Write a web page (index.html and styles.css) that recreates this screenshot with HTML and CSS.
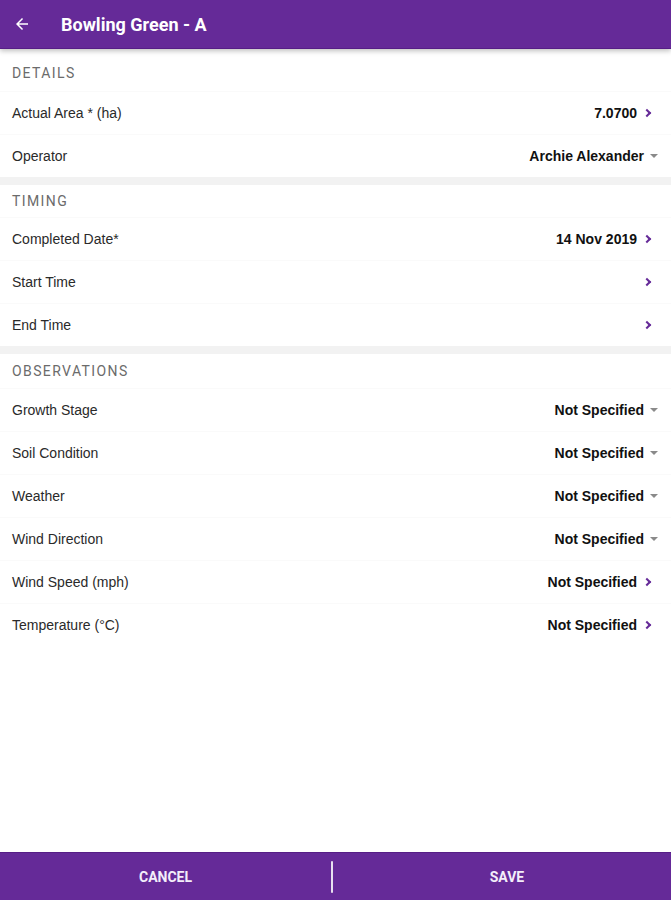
FILE: index.html
```html
<!DOCTYPE html>
<html>
<head>
<meta charset="utf-8">
<link rel="stylesheet" href="styles.css">
</head>
<body>
<div class="app">
  <header class="topbar">
    <svg class="back" width="18" height="18" viewBox="0 0 24 24"><path d="M20 11H7.83l5.59-5.59L12 4l-8 8 8 8 1.41-1.41L7.83 13H20v-2z" fill="#fff"/></svg>
    <h1 class="title">Bowling Green - A</h1>
  </header>
  <main class="content">
    <section class="section first">
      <div class="sec-head">DETAILS</div>
      <div class="row"><span class="label">Actual Area * (ha)</span><span class="value">7.0700<i class="chev"></i></span></div>
      <div class="row"><span class="label">Operator</span><span class="value">Archie Alexander<i class="caret"></i></span></div>
    </section>
    <section class="section">
      <div class="sec-head">TIMING</div>
      <div class="row"><span class="label">Completed Date*</span><span class="value">14 Nov 2019<i class="chev"></i></span></div>
      <div class="row"><span class="label">Start Time</span><span class="value"><i class="chev"></i></span></div>
      <div class="row"><span class="label">End Time</span><span class="value"><i class="chev"></i></span></div>
    </section>
    <section class="section obs">
      <div class="sec-head">OBSERVATIONS</div>
      <div class="row"><span class="label">Growth Stage</span><span class="value">Not Specified<i class="caret"></i></span></div>
      <div class="row"><span class="label">Soil Condition</span><span class="value">Not Specified<i class="caret"></i></span></div>
      <div class="row"><span class="label">Weather</span><span class="value">Not Specified<i class="caret"></i></span></div>
      <div class="row"><span class="label">Wind Direction</span><span class="value">Not Specified<i class="caret"></i></span></div>
      <div class="row"><span class="label">Wind Speed (mph)</span><span class="value">Not Specified<i class="chev"></i></span></div>
      <div class="row"><span class="label">Temperature (°C)</span><span class="value">Not Specified<i class="chev"></i></span></div>
    </section>
  </main>
  <footer class="bottombar">
    <button class="action cancel">CANCEL</button>
    <span class="divider"></span>
    <button class="action save">SAVE</button>
  </footer>
</div>
</body>
</html>
```
FILE: styles.css
```css
* { box-sizing: border-box; }
html, body { margin: 0; padding: 0; }
body {
  font-family: "Liberation Sans", Arial, sans-serif;
  background: #fff;
  color: #222;
}
.app {
  width: 671px;
  height: 900px;
  display: flex;
  flex-direction: column;
}
.topbar {
  height: 49px;
  flex: 0 0 49px;
  background: #652a98;
  border-bottom: 1px solid #561e86;
  box-shadow: 0 2px 5px rgba(0,0,0,0.25);
  display: flex;
  align-items: center;
  padding-left: 13px;
  position: relative;
  z-index: 2;
}
.back { display: block; }
.title {
  margin: 0 0 0 30px;
  font-family: Roboto, "Liberation Sans", sans-serif;
  font-weight: 700;
  font-size: 18px;
  color: #fff;
}
.content {
  flex: 1;
  display: flex;
  flex-direction: column;
}
.section {
  border-bottom: 8px solid #f2f2f2;
}
.section:last-child { border-bottom: none; }
.sec-head {
  height: 32px;
  display: flex;
  align-items: center;
  padding-left: 12px;
  font-family: Roboto, "Liberation Sans", sans-serif;
  font-size: 14px;
  letter-spacing: 1.4px;
  color: #6b6b6b;
}
.section.first .sec-head {
  height: 42px;
  padding-top: 5px;
}
.section.obs .sec-head {
  height: 34px;
}
.row {
  height: 43px;
  display: flex;
  align-items: center;
  justify-content: space-between;
  padding: 0 12px;
  border-top: 1px solid #fafafa;
}
.label {
  font-size: 14px;
  color: #2a2a2a;
}
.value {
  display: flex;
  align-items: center;
  font-size: 14px;
  font-weight: 700;
  color: #111;
}
.chev {
  display: inline-block;
  width: 6px;
  height: 6px;
  border-right: 2px solid #652a98;
  border-top: 2px solid #652a98;
  transform: rotate(45deg);
  margin-left: 7px;
  margin-right: 9px;
}
.caret {
  display: inline-block;
  width: 0;
  height: 0;
  border-left: 4px solid transparent;
  border-right: 4px solid transparent;
  border-top: 4px solid #8a8a8a;
  margin-left: 6px;
  margin-right: 1px;
}
.bottombar {
  height: 48px;
  flex: 0 0 48px;
  background: #652a98;
  border-top: 1px solid #561e86;
  display: flex;
  align-items: center;
}
.action {
  height: 100%;
  background: transparent;
  border: none;
  color: #f3eefa;
  font-family: Roboto, "Liberation Sans", sans-serif;
  font-weight: 700;
  font-size: 14px;
  padding: 0;
}
.action.cancel { flex: 0 0 331px; }
.action.save { flex: 1; padding-left: 10px; }
.divider {
  width: 2px;
  height: 32px;
  background: #e8e0f0;
  border-radius: 1px;
}
```
